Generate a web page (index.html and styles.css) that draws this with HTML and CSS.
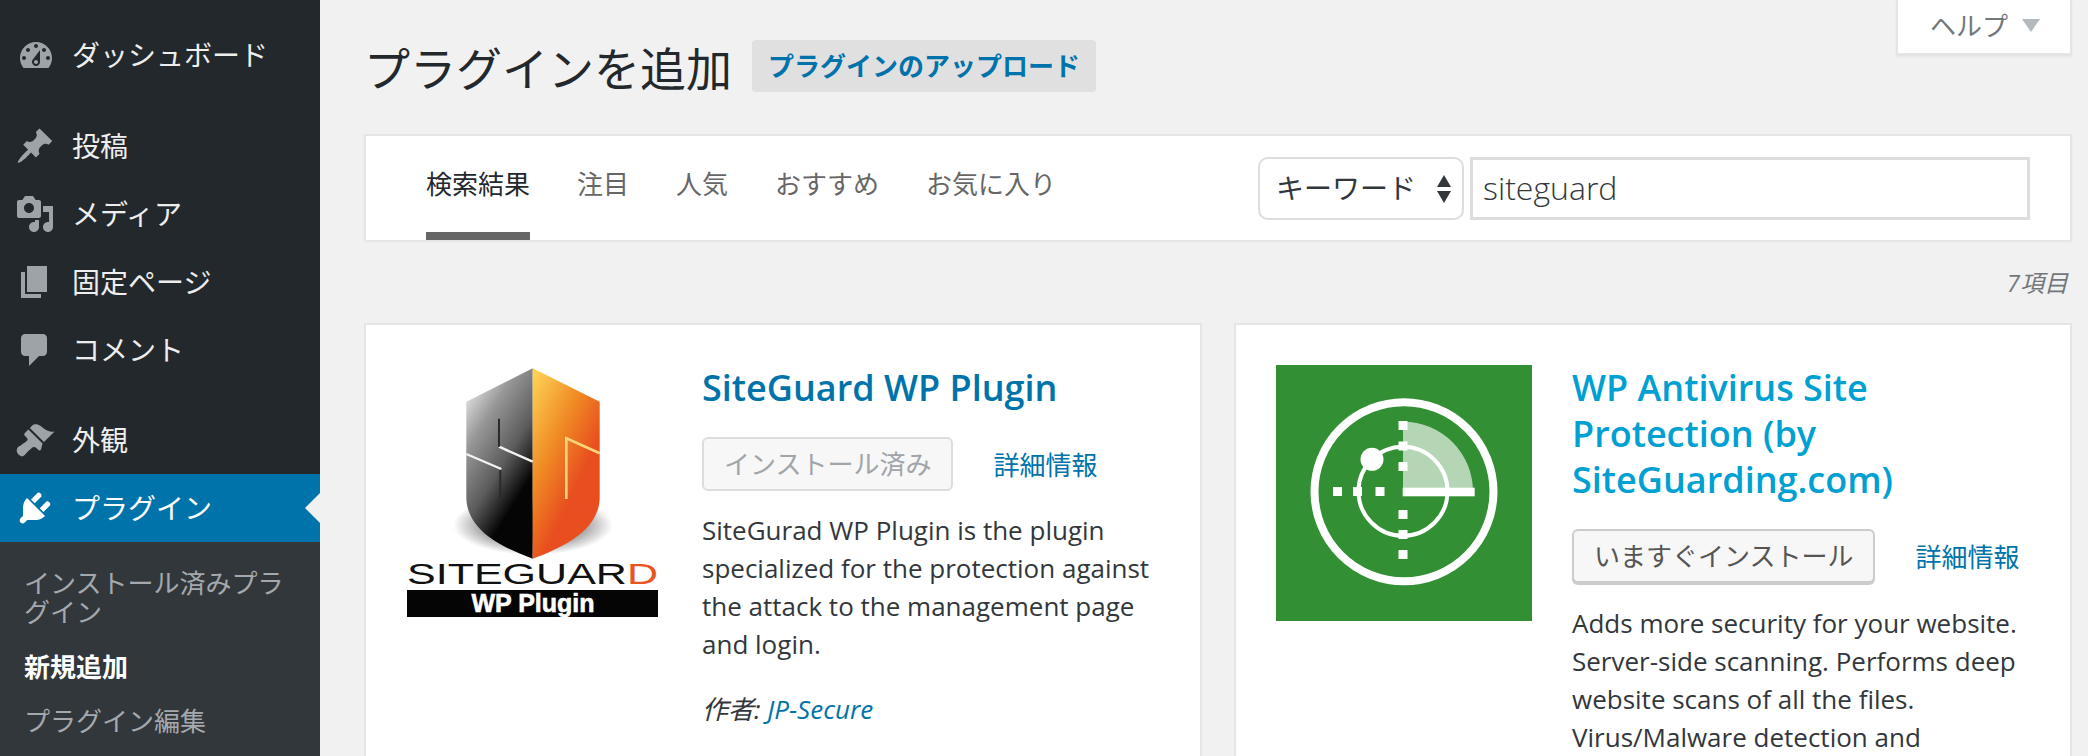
FILE: index.html
```html
<!DOCTYPE html>
<html lang="ja">
<head>
    <meta charset="UTF-8">
    <title>プラグインを追加</title>
    <link rel="stylesheet" href="styles.css">
</head>
<body>
<div class="page">
    <!--サイドメニュー-->
    <nav class="sidebar">
        <ul class="menu">
            <li class="menu-item menu-gap">
                <svg class="menu-icon" viewBox="0 0 20 20"><path d="M3.76 16h12.48c1.1-1.37 1.76-3.11 1.76-5 0-4.42-3.58-8-8-8s-8 3.58-8 8c0 1.89.66 3.63 1.76 5zM10 4c.55 0 1 .45 1 1s-.45 1-1 1-1-.45-1-1 .45-1 1-1zM6 6c.55 0 1 .45 1 1s-.45 1-1 1-1-.45-1-1 .45-1 1-1zm8 0c.55 0 1 .45 1 1s-.45 1-1 1-1-.45-1-1 .45-1 1-1zm-5.37 5.55L12 7v6c0 1.1-.9 2-2 2s-2-.9-2-2c0-.57.24-1.08.63-1.45zM4 10c.55 0 1 .45 1 1s-.45 1-1 1-1-.45-1-1 .45-1 1-1zm12 0c.55 0 1 .45 1 1s-.45 1-1 1-1-.45-1-1 .45-1 1-1zm-5 3c0-.55-.45-1-1-1s-1 .45-1 1 .45 1 1 1 1-.45 1-1z"/></svg>
                <span>ダッシュボード</span>
            </li>
            <li class="menu-item">
                <svg class="menu-icon" viewBox="0 0 20 20"><path d="M10.44 3.02l1.82-1.82 6.36 6.35-1.83 1.82c-1.05-.68-2.48-.57-3.41.36l-.75.75c-.92.93-1.04 2.35-.35 3.41l-1.83 1.82-2.41-2.41-2.8 2.79c-.42.42-3.38 2.71-3.8 2.29s1.86-3.39 2.28-3.81l2.79-2.79L4.1 9.36l1.83-1.82c1.05.69 2.48.57 3.4-.36l.75-.75c.93-.92 1.05-2.35.36-3.41z"/></svg>
                <span>投稿</span>
            </li>
            <li class="menu-item">
                <svg class="menu-icon" viewBox="0 0 20 20"><path d="M13 11V4c0-.55-.45-1-1-1h-1.67L9 1H5L3.67 3H2c-.55 0-1 .45-1 1v7c0 .55.45 1 1 1h10c.55 0 1-.45 1-1zM7 4.5c1.38 0 2.5 1.12 2.5 2.5S8.38 9.5 7 9.5 4.5 8.38 4.5 7 5.62 4.5 7 4.5zM14 6h5v10.5c0 1.38-1.12 2.5-2.5 2.5S14 17.88 14 16.5s1.12-2.5 2.5-2.5c.17 0 .34.02.5.05V9h-3V6zm-4 8.05V13h2v3.5c0 1.38-1.12 2.5-2.5 2.5S7 17.88 7 16.5 8.12 14 9.5 14c.17 0 .34.02.5.05z"/></svg>
                <span>メディア</span>
            </li>
            <li class="menu-item">
                <svg class="menu-icon" viewBox="0 0 20 20"><path d="M6 15V2h10v13H6zm-1 1h8v2H3V5h2v11z"/></svg>
                <span>固定ページ</span>
            </li>
            <li class="menu-item menu-gap-small">
                <svg class="menu-icon" viewBox="0 0 20 20"><path d="M5 2h9c1.1 0 2 .9 2 2v7c0 1.1-.9 2-2 2h-2l-5 5v-5H5c-1.1 0-2-.9-2-2V4c0-1.1.9-2 2-2z"/></svg>
                <span>コメント</span>
            </li>
            <li class="menu-item">
                <svg class="menu-icon" viewBox="0 0 20 20"><path d="M14.48 11.06L7.41 3.99l1.5-1.5c.5-.56 2.3-.47 3.51.32 1.21.8 1.43 1.28 2.91 2.1 1.18.64 2.45 1.26 4.45.85zm-.71.71L6.7 4.7 4.93 6.47c-.39.39-.39 1.02 0 1.41l1.06 1.06c.39.39.39 1.03 0 1.42-.6.6-1.43 1.11-2.21 1.69-.35.26-.7.53-1.01.84C1.43 13.23.5 14.5 1.05 16.1c.21.6.48.94.84 1.28.51.5 1.52 1 2.17.7.4-.18.85-.65 1.36-1.2.58-.63 1.16-1.25 2-2.01.39-.36.79-.7 1.12-1.01.55-.53 1.44-.47 2.01.06l1 1c.39.39 1.02.39 1.41 0z"/></svg>
                <span>外観</span>
            </li>
            <li class="menu-item current">
                <svg class="menu-icon" viewBox="0 0 20 20"><path d="M13.11 4.36L9.87 7.6 8 5.73l3.24-3.24c.35-.34 1.05-.2 1.56.32.52.51.66 1.21.31 1.55zm-8 1.77l.91-1.12 9.01 9.01-1.19.84c-.71.71-2.63 1.16-3.82 1.16H6.14L4.9 17.26c-.59.59-1.54.59-2.12 0-.59-.58-.59-1.53 0-2.12l1.24-1.24v-3.88c0-1.13.4-3.19 1.09-3.89zm7.26 3.97l3.24-3.24c.34-.35 1.04-.21 1.55.31.52.51.66 1.21.31 1.55l-3.24 3.25z"/></svg>
                <span>プラグイン</span>
            </li>
        </ul>
        <ul class="submenu">
            <li>インストール済みプラグイン</li>
            <li class="on">新規追加</li>
            <li>プラグイン編集</li>
        </ul>
    </nav>

    <main class="content">
        <div class="help-tab">ヘルプ<i class="help-arrow"></i></div>

        <div class="title-row">
            <h1>プラグインを追加</h1>
            <a class="upload-btn">プラグインのアップロード</a>
        </div>

        <div class="filter-bar">
            <ul class="tabs">
                <li class="current">検索結果</li>
                <li>注目</li>
                <li>人気</li>
                <li>おすすめ</li>
                <li>お気に入り</li>
            </ul>
            <form class="search">
                <div class="select-wrap">
                    <select class="search-type">
                        <option>キーワード</option>
                    </select>
                    <i class="arrow-up"></i>
                    <i class="arrow-down"></i>
                </div>
                <input class="search-input" type="text" value="siteguard">
            </form>
        </div>

        <div class="count">7項目</div>

        <div class="cards">
            <div class="card">
                <svg class="plugin-icon" viewBox="0 0 256 256">
                    <defs>
                        <linearGradient id="shieldGrey" x1="0.05" y1="0.05" x2="0.55" y2="0.95">
                            <stop offset="0" stop-color="#f0f0f0"/>
                            <stop offset="0.3" stop-color="#979797"/>
                            <stop offset="0.62" stop-color="#5c5c5c"/>
                            <stop offset="0.88" stop-color="#050505"/>
                        </linearGradient>
                        <linearGradient id="shieldOrange" x1="0.05" y1="0.02" x2="0.55" y2="0.7">
                            <stop offset="0" stop-color="#fdd055"/>
                            <stop offset="0.55" stop-color="#f08a24"/>
                            <stop offset="1" stop-color="#e84e1f"/>
                        </linearGradient>
                        <radialGradient id="shieldShadow">
                            <stop offset="0.4" stop-color="#000" stop-opacity="0.6"/>
                            <stop offset="1" stop-color="#000" stop-opacity="0"/>
                        </radialGradient>
                    </defs>
                    <ellipse cx="127" cy="160" rx="80" ry="30" fill="url(#shieldShadow)"/>
                    <path d="M126.7 3.3L60.3 36.7V131.7C60.3 165 95 182 126.7 193.7Z" fill="url(#shieldGrey)"/>
                    <path d="M126.7 3.3L193.7 36.7V131.7C193.7 165 158 182 126.7 193.7Z" fill="url(#shieldOrange)"/>
                    <path d="M60.3 89L95.3 104M93 81.7L126.7 96.7" stroke="#f2f2f2" stroke-width="2.4" fill="none"/>
                    <path d="M93 53.7V81.7M94.3 105V133" stroke="#2b2b2b" stroke-width="2" fill="none"/>
                    <path d="M160.3 134V73.3L193.7 88.3" stroke="#fdd67a" stroke-width="2.6" fill="none"/>
                    <text class="logo-name" x="1" y="219" textLength="251" lengthAdjust="spacingAndGlyphs">SITEGUAR<tspan fill="#e8551f">D</tspan></text>
                    <rect x="1" y="225" width="251" height="27" fill="#050505"/>
                    <text class="logo-sub" x="127" y="247" text-anchor="middle">WP Plugin</text>
                </svg>
                <div class="card-body">
                    <h3 class="card-title"><a>SiteGuard WP Plugin</a></h3>
                    <div class="actions">
                        <a class="btn disabled">インストール済み</a>
                        <a class="more">詳細情報</a>
                    </div>
                    <p class="desc">SiteGurad WP Plugin is the plugin specialized for the protection against the attack to the management page and login.</p>
                    <p class="author">作者: <a>JP-Secure</a></p>
                </div>
            </div>

            <div class="card">
                <svg class="plugin-icon" viewBox="0 0 256 256">
                    <rect width="256" height="256" fill="#338f34"/>
                    <path d="M127 127V56.7A70 70 0 0 1 197 127Z" fill="#fff" fill-opacity="0.64"/>
                    <circle cx="128" cy="126.7" r="89.5" fill="none" stroke="#fff" stroke-width="8"/>
                    <circle cx="127" cy="126.3" r="44.5" fill="none" stroke="#fff" stroke-width="4"/>
                    <circle cx="96" cy="94.3" r="11.5" fill="#fff"/>
                    <rect x="126.7" y="122.7" width="72" height="8.6" fill="#fff"/>
                    <g fill="#fff">
                        <rect x="122.5" y="56" width="9" height="9"/>
                        <rect x="122.5" y="76.5" width="9" height="9"/>
                        <rect x="122.5" y="97" width="9" height="9"/>
                        <rect x="122.5" y="145" width="9" height="9"/>
                        <rect x="122.5" y="165" width="9" height="9"/>
                        <rect x="122.5" y="185" width="9" height="9"/>
                        <rect x="57" y="122" width="9" height="9"/>
                        <rect x="77" y="122" width="9" height="9"/>
                        <rect x="99.5" y="122" width="9" height="9"/>
                    </g>
                </svg>
                <div class="card-body">
                    <h3 class="card-title light"><a>WP Antivirus Site Protection (by SiteGuarding.com)</a></h3>
                    <div class="actions">
                        <a class="btn">いますぐインストール</a>
                        <a class="more">詳細情報</a>
                    </div>
                    <p class="desc lower">Adds more security for your website. Server-side scanning. Performs deep website scans of all the files. Virus/Malware detection and</p>
                </div>
            </div>
        </div>
    </main>
</div>
</body>
</html>
```

FILE: styles.css
```css
* {
    padding: 0;
    margin: 0;
    list-style: none;
    box-sizing: border-box;
}

html, body {
    height: 756px;
    overflow: hidden;
}

body {
    background: #f1f1f1;
    color: #32373c;
    font-family: "Open Sans", "Noto Sans CJK JP", sans-serif;
    font-size: 26px;
}

.page {
    display: flex;
    height: 756px;
}

/* sidebar */
.sidebar {
    width: 320px;
    flex-shrink: 0;
    padding-top: 20px;
    background: #23282d;
}

.menu-item {
    display: flex;
    align-items: center;
    height: 68px;
    padding-left: 15px;
    color: #eee;
    font-size: 28px;
    position: relative;
}

.menu-item span {
    margin-top: -2px;
}

.menu-item:first-child span {
    margin-top: 0;
}

.menu-icon {
    width: 40px;
    height: 40px;
    margin-right: 17px;
    fill: #9ea3a8;
}

/* the gauge sits a little lower than the other icons */
.menu-item:first-child .menu-icon {
    margin-top: 4px;
    margin-left: 1px;
    margin-right: 16px;
}

.menu-gap {
    margin-bottom: 24px;
}

.menu-gap-small {
    margin-bottom: 22px;
}

.menu-item.current {
    background: #0073aa;
    color: #fff;
}

.menu-item.current .menu-icon {
    fill: #fff;
}

.menu-item.current::after {
    content: "";
    position: absolute;
    right: 0;
    top: 19px;
    border: 15px solid transparent;
    border-right-color: #f1f1f1;
}

.submenu {
    padding: 27px 24px 0;
    height: 214px;
    background: #32373c;
    color: #a5a9ad;
    font-size: 26px;
}

.submenu li {
    line-height: 29px;
    margin-bottom: 26px;
}

.submenu li.on {
    margin-bottom: 25px;
    color: #fff;
    font-weight: 700;
}

/* content */
.content {
    flex: 1;
    padding: 40px 16px 0 44px;
    position: relative;
}

.help-tab {
    position: absolute;
    top: 0;
    right: 16px;
    display: flex;
    align-items: center;
    width: 176px;
    height: 55px;
    padding: 0 0 3px 32px;
    background: #fff;
    border: 2px solid #e5e5e5;
    border-top: 0;
    box-shadow: 0 2px 2px rgba(0, 0, 0, .05);
    color: #72777c;
}

.help-arrow {
    margin-left: 14px;
    border-style: solid;
    border-width: 13px 9px 0;
    border-color: #b4b9be transparent transparent;
}

.title-row {
    display: flex;
    align-items: center;
    height: 52px;
}

.title-row h1 {
    font-size: 46px;
    font-weight: 400;
    color: #23282d;
}

.upload-btn {
    margin-left: 20px;
    padding: 0 16px;
    line-height: 52px;
    background: #e0e0e0;
    border-radius: 4px;
    color: #0073aa;
    font-weight: 600;
}

.filter-bar {
    display: flex;
    justify-content: space-between;
    align-items: center;
    height: 106px;
    margin-top: 42px;
    padding: 0 40px 0 60px;
    background: #fff;
    border: 2px solid #e5e5e5;
    border-bottom: 0;
    box-shadow: 0 2px 2px rgba(0, 0, 0, .05);
}

.tabs {
    display: flex;
    gap: 47px;
    color: #666;
}

.tabs li {
    padding: 30px 0;
    line-height: 36px;
    border-bottom: 8px solid transparent;
}

.tabs li.current {
    color: #23282d;
    border-bottom-color: #666;
}

.search {
    display: flex;
    gap: 6px;
}

.select-wrap {
    position: relative;
}

.search-type {
    display: block;
    width: 206px;
    height: 63px;
    padding-left: 16px;
    appearance: none;
    background: #fff;
    border: 2px solid #ddd;
    border-radius: 10px;
    color: #32373c;
    font: 28px "Open Sans", "Noto Sans CJK JP", sans-serif;
}

.arrow-up,
.arrow-down {
    position: absolute;
    right: 13px;
    border-left: 7px solid transparent;
    border-right: 7px solid transparent;
}

.arrow-up {
    top: 18px;
    border-bottom: 12px solid #32373c;
}

.arrow-down {
    top: 34px;
    border-top: 12px solid #32373c;
}

.search-input {
    width: 560px;
    height: 63px;
    padding: 0 10px 2px;
    background: #fff;
    border: 3px solid #ddd;
    color: #32373c;
    font: 300 32px "Open Sans", sans-serif;
}

.count {
    margin-top: 26px;
    height: 34px;
    line-height: 34px;
    padding-right: 4px;
    text-align: right;
    color: #72777c;
    font-size: 24px;
    font-style: italic;
}

.cards {
    display: grid;
    grid-template-columns: 1fr 1fr;
    gap: 32px;
    margin-top: 23px;
}

.card {
    display: flex;
    gap: 40px;
    height: 433px;
    padding: 40px;
    background: #fff;
    border: 2px solid #e5e5e5;
    border-bottom: 0;
}

.plugin-icon {
    width: 256px;
    height: 256px;
    flex-shrink: 0;
}

.logo-name {
    font: 30px "Liberation Sans", sans-serif;
    fill: #111;
}

.logo-sub {
    font: 700 25px "Liberation Sans", sans-serif;
    fill: #fff;
    stroke: #fff;
    stroke-width: .6px;
}

.card-title {
    font-size: 36px;
    font-weight: 600;
    line-height: 46px;
    color: #0073aa;
}

.card-title.light {
    color: #00a0d2;
}

.actions {
    display: flex;
    align-items: center;
    gap: 40px;
    margin-top: 26px;
}

.btn {
    height: 54px;
    padding: 0 20px;
    line-height: 50px;
    background: #f7f7f7;
    border: 2px solid #ccc;
    border-radius: 6px;
    box-shadow: 0 2px 0 #ccc;
    color: #555;
}

.btn.disabled {
    border-color: #ddd;
    box-shadow: none;
    color: #a0a5aa;
}

.more {
    color: #0073aa;
}

.desc {
    margin-top: 20px;
    line-height: 38px;
}

.desc.lower {
    margin-top: 21px;
}

.author {
    margin-top: 27px;
    line-height: 38px;
    font-style: italic;
}

.author a {
    color: #0073aa;
}
```
